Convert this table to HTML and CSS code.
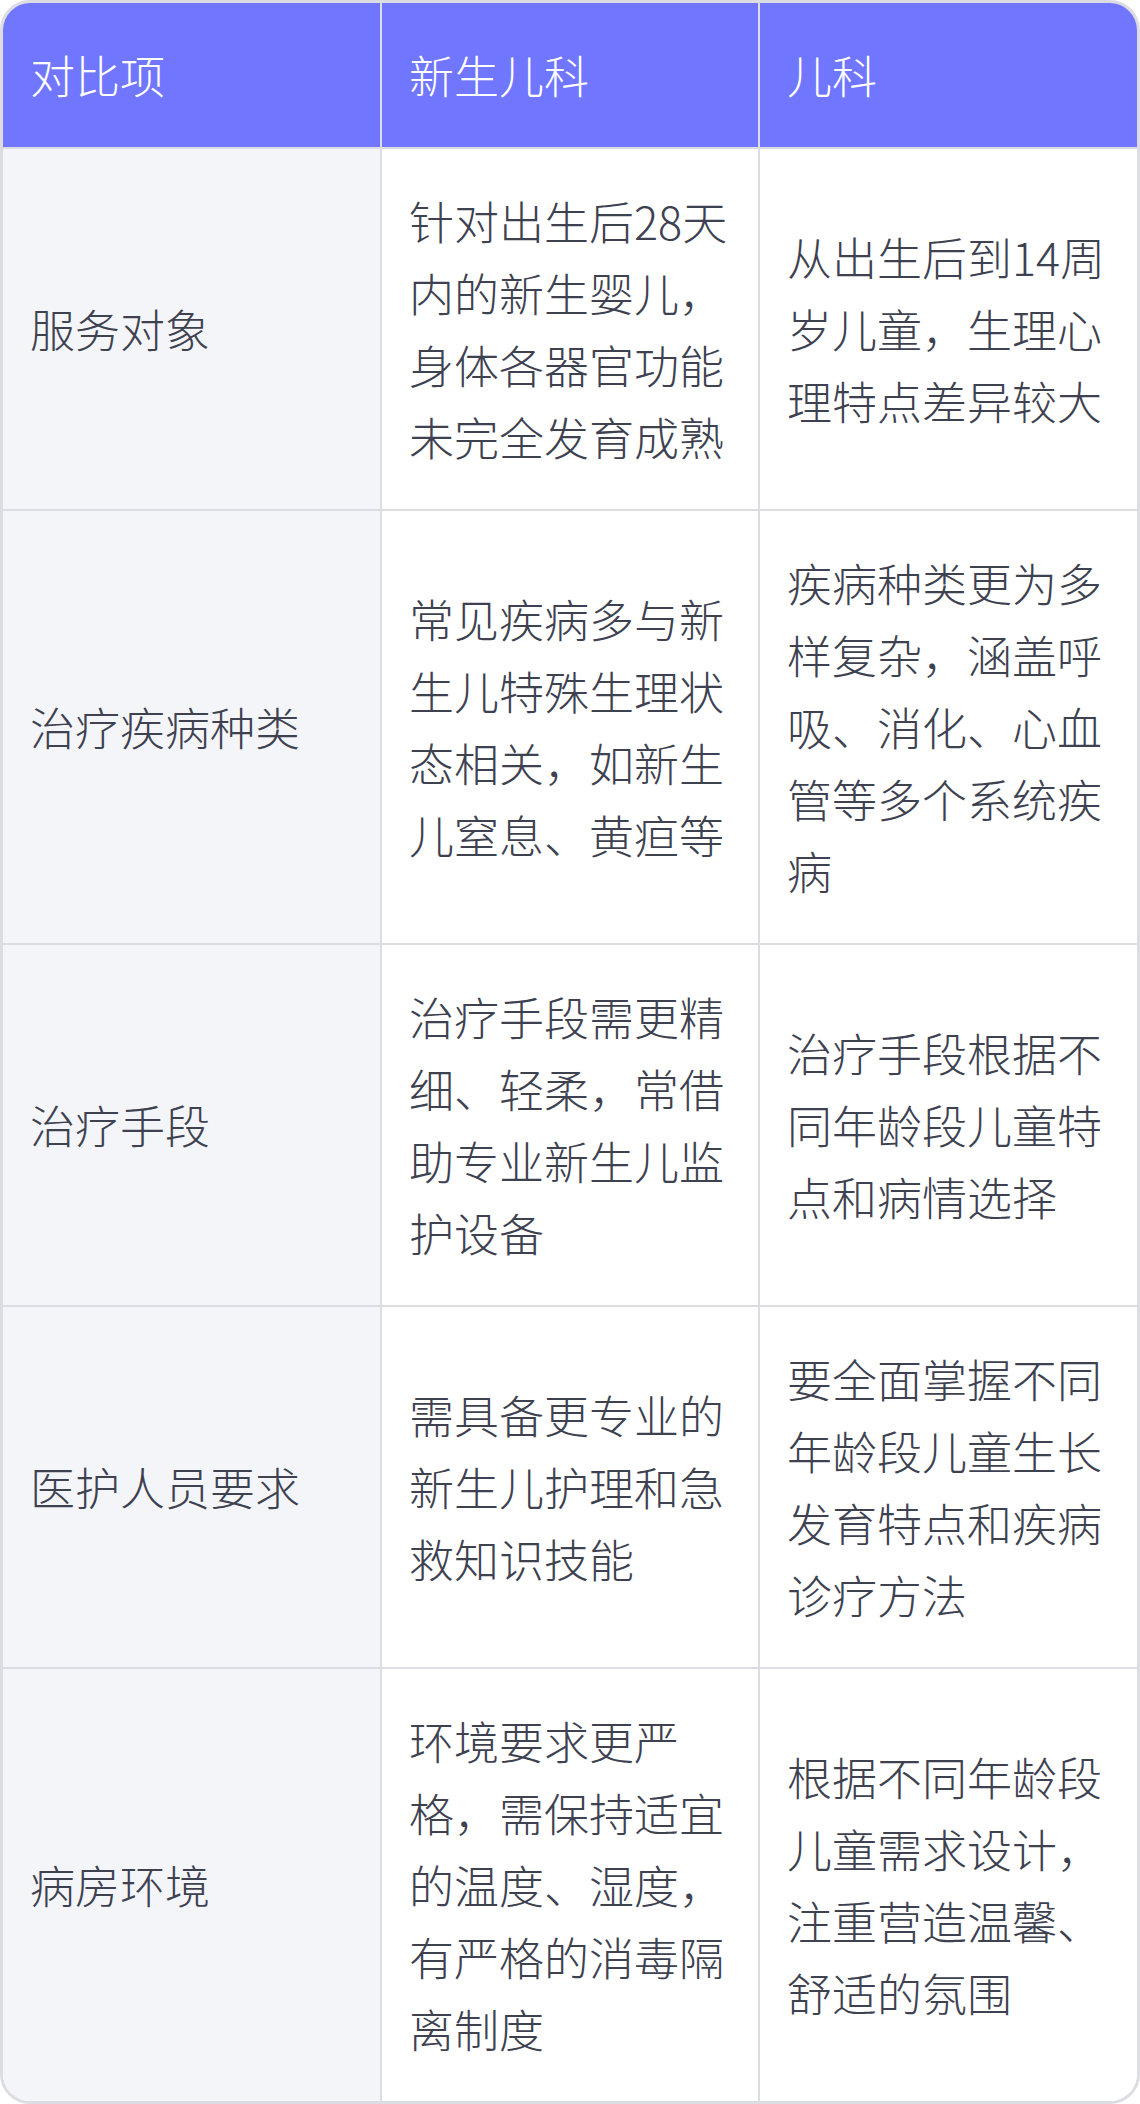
FILE: index.html
```html
<!DOCTYPE html>
<html lang="zh-CN">
<head>
  <meta charset="UTF-8">
  <meta name="viewport" content="width=device-width, initial-scale=1.0">
  <title>新生儿科与儿科对比</title>
  <link rel="stylesheet" href="styles.css">
</head>
<body>
  <div class="table-wrap">
    <table class="compare">
      <thead>
        <tr>
          <th>对比项</th>
          <th>新生儿科</th>
          <th>儿科</th>
        </tr>
      </thead>
      <tbody>
        <tr>
          <td class="item">服务对象</td>
          <td>针对出生后28天内的新生婴儿，身体各器官功能未完全发育成熟</td>
          <td>从出生后到14周岁儿童，生理心理特点差异较大</td>
        </tr>
        <tr>
          <td class="item">治疗疾病种类</td>
          <td>常见疾病多与新生儿特殊生理状态相关，如新生儿窒息、黄疸等</td>
          <td>疾病种类更为多样复杂，涵盖呼吸、消化、心血管等多个系统疾病</td>
        </tr>
        <tr>
          <td class="item">治疗手段</td>
          <td>治疗手段需更精细、轻柔，常借助专业新生儿监护设备</td>
          <td>治疗手段根据不同年龄段儿童特点和病情选择</td>
        </tr>
        <tr>
          <td class="item">医护人员要求</td>
          <td>需具备更专业的新生儿护理和急救知识技能</td>
          <td>要全面掌握不同年龄段儿童生长发育特点和疾病诊疗方法</td>
        </tr>
        <tr>
          <td class="item">病房环境</td>
          <td>环境要求更严格，需保持适宜的温度、湿度，有严格的消毒隔离制度</td>
          <td>根据不同年龄段儿童需求设计，注重营造温馨、舒适的氛围</td>
        </tr>
      </tbody>
    </table>
  </div>
</body>
</html>
```

FILE: styles.css
```css
body {
  margin: 0;
  padding: 0;
  background: #fff;
  font-family: "Noto Sans CJK SC", "Noto Sans", sans-serif;
  color: #3d4150;
}
.table-wrap {
  width: 1140px;
  box-sizing: border-box;
  border: 3px solid #dcdde2;
  border-radius: 30px;
  overflow: hidden;
}
.compare {
  width: 100%;
  border-collapse: collapse;
  table-layout: fixed;
  font-size: 45px;
  font-weight: 300;
  line-height: 72px;
}
.compare th,
.compare td {
  padding: 36px 27px;
  text-align: left;
  vertical-align: middle;
  border: 2px solid #dcdde2;
  word-break: break-all;
}
.compare tr > :first-child {
  border-left: none;
}
.compare tr > :last-child {
  border-right: none;
}
.compare thead th {
  border-top: none;
  background: #7176ff;
  color: #fff;
  font-weight: 300;
  border-bottom: none;
}
.compare tbody tr:last-child td {
  border-bottom: none;
}
.compare td {
  background: #fff;
}
.compare td.item {
  background: #f4f5f9;
}
```
